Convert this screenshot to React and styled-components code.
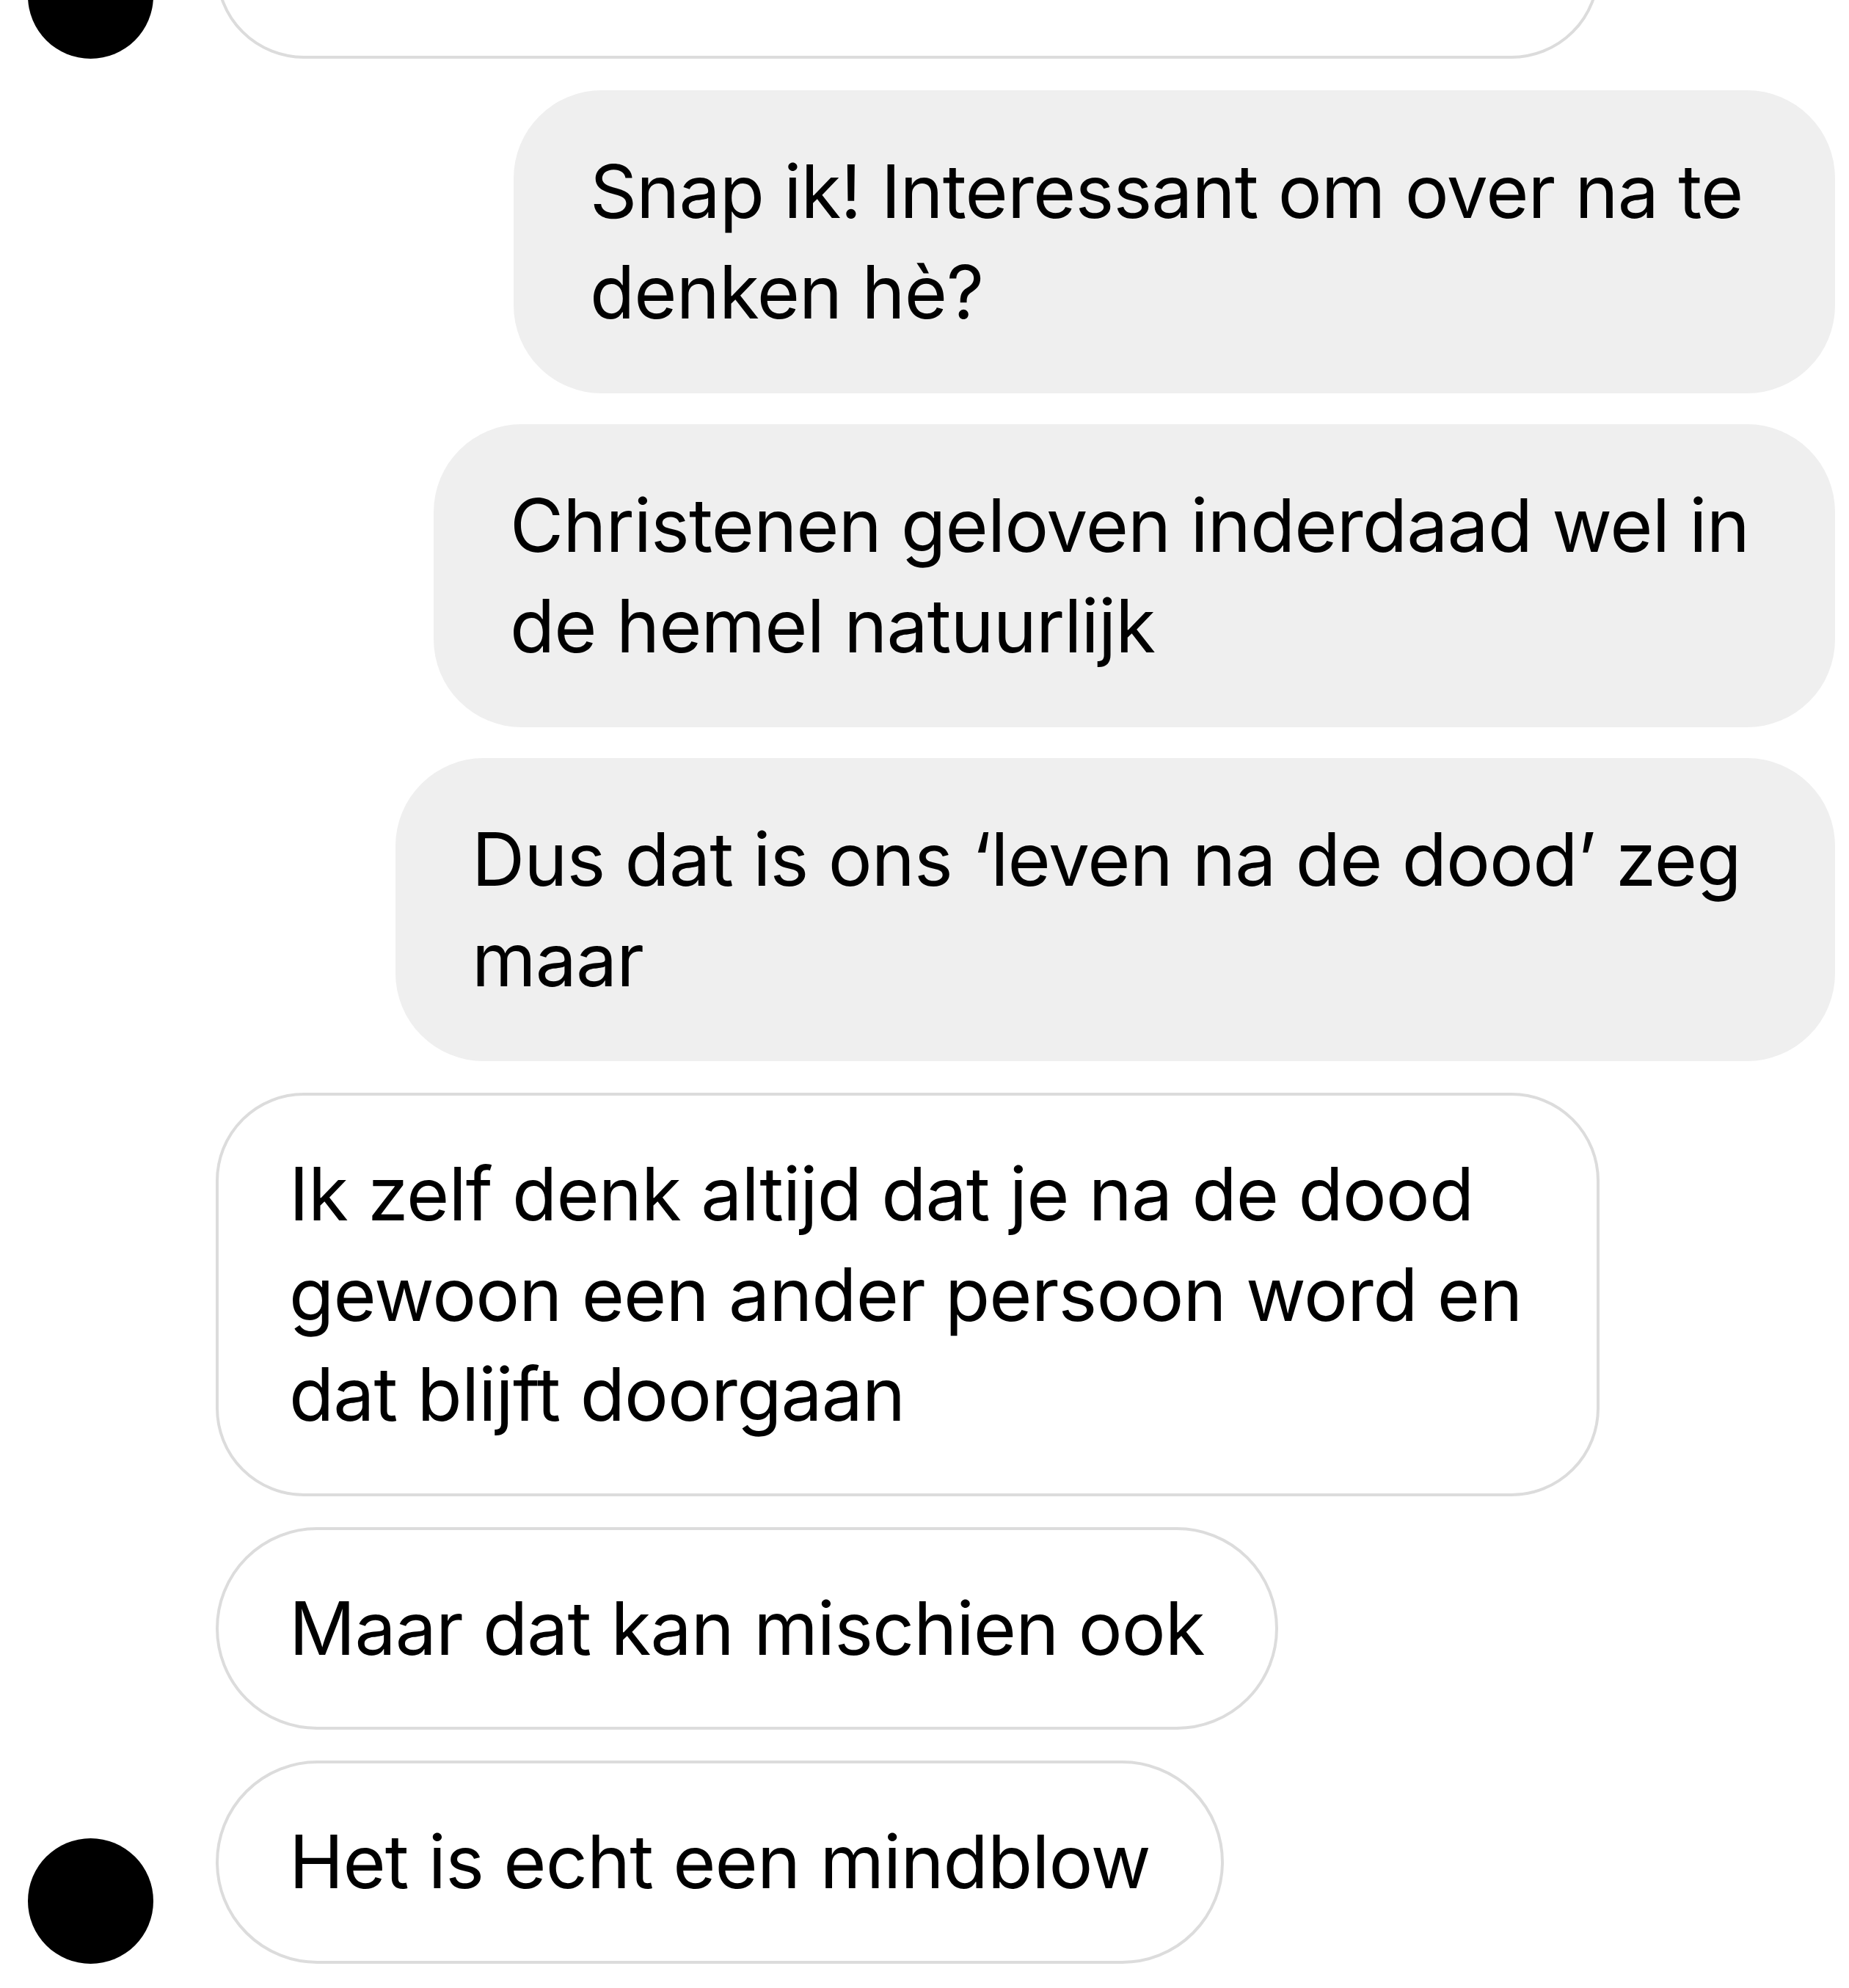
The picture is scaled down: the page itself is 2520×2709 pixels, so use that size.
import React from "react";
import styled, { createGlobalStyle, css } from "styled-components";

const GlobalStyle = createGlobalStyle`
  html, body {
    margin: 0;
    padding: 0;
    background: #ffffff;
  }
  body {
    font-family: Inter, "Noto Sans", "Liberation Sans", sans-serif;
    -webkit-font-smoothing: antialiased;
  }
`;

const Screen = styled.div`
  width: 2520px;
  height: 2709px;
  overflow: hidden;
  background: #ffffff;
`;

const Thread = styled.div`
  display: flex;
  flex-direction: column;
  gap: 43px;
  margin-top: -220px;
`;

const Group = styled.div`
  display: flex;
  align-items: flex-end;
  ${(props) =>
    props.mine
      ? css`
          justify-content: flex-end;
          padding-right: 19px;
        `
      : css`
          padding-left: 38px;
        `}
`;

const AvatarSlot = styled.div`
  width: 171px;
  flex: none;
  margin-right: 85px;
`;

const Avatar = styled.div`
  width: 171px;
  height: 171px;
  border-radius: 50%;
  background: #000000;
`;

const Stack = styled.div`
  display: flex;
  flex-direction: column;
  gap: 42px;
  align-items: ${(props) => (props.mine ? "flex-end" : "flex-start")};
`;

const Bubble = styled.div`
  box-sizing: border-box;
  width: ${(props) => (props.width ? `${props.width}px` : "auto")};
  min-height: ${(props) => (props.height ? `${props.height}px` : "0")};
  padding: 70px 104px;
  border-radius: ${(props) => (props.lines > 1 ? "120px" : "140px")};
  font-size: 100px;
  line-height: 136.5px;
  letter-spacing: -0.9px;
  color: #000000;
  white-space: nowrap;
  ${(props) =>
    props.mine
      ? css`
          background: #efefef;
        `
      : css`
          background: #ffffff;
          border: 4px solid #dcdcdc;
          padding: 66px 96px;
        `}
`;

const Line = styled.span`
  display: block;
`;

const groups = [
  {
    mine: false,
    messages: [{ lines: [], width: 1886, height: 300 }],
  },
  {
    mine: true,
    messages: [
      { lines: ["Snap ik! Interessant om over na te", "denken hè?"], width: 1801 },
      { lines: ["Christenen geloven inderdaad wel in", "de hemel natuurlijk"], width: 1910 },
      { lines: ["Dus dat is ons ‘leven na de dood’ zeg", "maar"], width: 1962 },
    ],
  },
  {
    mine: false,
    messages: [
      {
        lines: [
          "Ik zelf denk altijd dat je na de dood",
          "gewoon een ander persoon word en",
          "dat blijft doorgaan",
        ],
        width: 1886,
      },
      { lines: ["Maar dat kan mischien ook"] },
      { lines: ["Het is echt een mindblow"] },
    ],
  },
];

export default function App() {
  return (
    <Screen>
      <GlobalStyle />
      <Thread>
        {groups.map((group, gi) => (
          <Group key={gi} mine={group.mine}>
            {!group.mine && (
              <AvatarSlot>
                <Avatar />
              </AvatarSlot>
            )}
            <Stack mine={group.mine}>
              {group.messages.map((msg, mi) => (
                <Bubble
                  key={mi}
                  mine={group.mine}
                  width={msg.width}
                  height={msg.height}
                  lines={msg.lines.length || 2}
                >
                  {msg.lines.map((text, li) => (
                    <Line key={li}>{text}</Line>
                  ))}
                </Bubble>
              ))}
            </Stack>
          </Group>
        ))}
      </Thread>
    </Screen>
  );
}
